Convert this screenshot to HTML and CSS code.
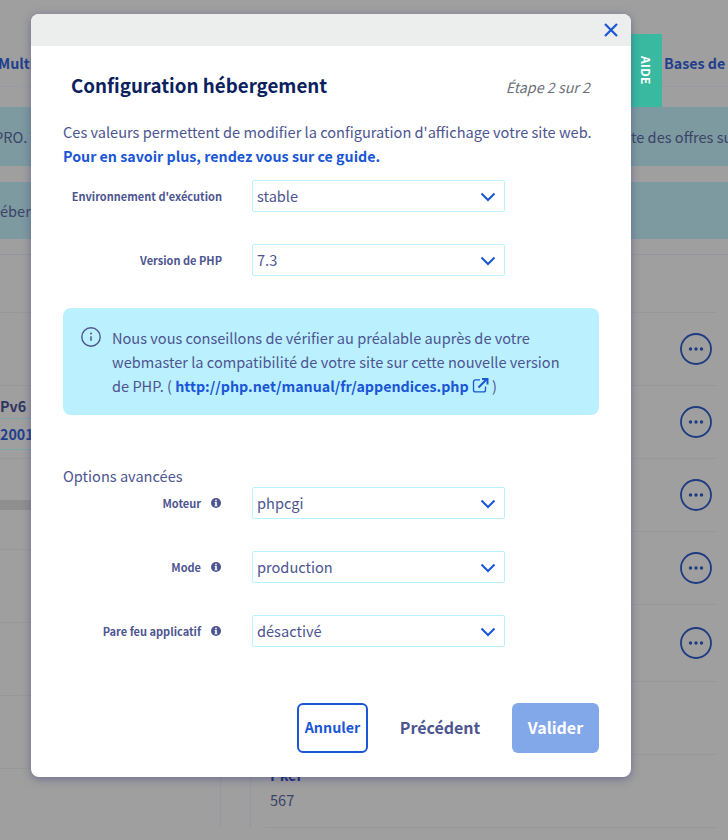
FILE: index.html
```html
<!DOCTYPE html>
<html lang="fr">
<head>
<meta charset="utf-8">
<title>Configuration hébergement</title>
<link rel="stylesheet" href="styles.css">
</head>
<body>
<svg class="defs" width="0" height="0" aria-hidden="true">
  <symbol id="chev" viewBox="0 0 16 10"><path d="M1.500 1.500 8 8l6.500-6.500" fill="none" stroke="currentColor" stroke-width="2"/></symbol>
  <symbol id="more" viewBox="0 0 32 32"><circle cx="16" cy="16" r="15" fill="none" stroke="currentColor" stroke-width="1.800"/><circle cx="10.500" cy="16" r="1.700" fill="currentColor"/><circle cx="16" cy="16" r="1.700" fill="currentColor"/><circle cx="21.500" cy="16" r="1.700" fill="currentColor"/></symbol>
  <symbol id="info" viewBox="0 0 10 10"><circle cx="5" cy="5" r="5" fill="currentColor"/><path d="M4.100 1.800h1.700v1.400H4.100zM3.700 4.100h2.100v3.100h.6v1H3.600v-1h.6V5.100h-.5z" fill="#fff"/></symbol>
</svg>

<div class="page">
  <nav class="tabs">
    <span class="tab tab-left">Multi</span>
    <span class="tab tab-right">Bases de</span>
  </nav>
  <div class="banner banner-one"><span class="banner-left">PRO. V</span><span class="banner-right">te des offres su</span></div>
  <div class="banner banner-two"><span class="banner-plain">éber</span></div>
  <div class="columns">
    <section class="col col-left">
      <div class="lrow lrow-first"></div>
      <div class="lrow"></div>
      <div class="lrow ltable">
        <div class="lhead">Pv6</div>
        <div class="lval">2001</div>
      </div>
      <div class="lrow lrow-short"></div>
      <div class="lband"></div>
      <div class="lrow lrow-after"></div>
      <div class="lrow"></div>
      <div class="lrow"></div>
      <div class="lrow"></div>
    </section>
    <section class="col col-right">
      <div class="rrow rrow-first"></div>
      <div class="rrow"><svg class="more"><use href="#more"/></svg></div>
      <div class="rrow"><svg class="more"><use href="#more"/></svg></div>
      <div class="rrow"><svg class="more"><use href="#more"/></svg></div>
      <div class="rrow"><svg class="more"><use href="#more"/></svg></div>
      <div class="rrow rrow-tall"><svg class="more"><use href="#more"/></svg></div>
      <div class="rrow"></div>
      <div class="rrow rrow-data"><div><div class="dt">Pker</div><div class="dd">567</div></div></div>
    </section>
  </div>
  <div class="aide"><span>AIDE</span></div>
</div>

<div class="modal" role="dialog">
  <header class="modal-head">
    <svg class="close" viewBox="0 0 14 14"><path d="M1 1l12 12M13 1 1 13" fill="none" stroke="currentColor" stroke-width="2.200"/></svg>
  </header>
  <div class="modal-body">
    <div class="title-row">
      <h1 class="title">Configuration hébergement</h1>
      <span class="step">Étape 2 sur 2</span>
    </div>
    <p class="intro">Ces valeurs permettent de modifier la configuration d'affichage votre site web.<br><a class="link">Pour en savoir plus, rendez vous sur ce guide.</a></p>

    <div class="form">
      <div class="field">
        <span class="label">Environnement d'exécution</span>
        <div class="select"><span>stable</span><svg class="chev"><use href="#chev"/></svg></div>
      </div>
      <div class="field">
        <span class="label">Version de PHP</span>
        <div class="select"><span>7.3</span><svg class="chev"><use href="#chev"/></svg></div>
      </div>
    </div>

    <div class="alert">
      <svg class="alert-icon" viewBox="0 0 20 20"><circle cx="10" cy="10" r="9.200" fill="none" stroke="currentColor" stroke-width="1.400"/><circle cx="10" cy="6.400" r="1" fill="currentColor"/><path d="M10 9.200v4.600" stroke="currentColor" stroke-width="1.500"/></svg>
      <p class="alert-text">Nous vous conseillons de vérifier au préalable auprès de votre webmaster la compatibilité de votre site sur cette nouvelle version de PHP. ( <a class="link">http://php.net/manual/fr/appendices.php<svg class="ext" viewBox="0 0 17 15"><path d="M8 2.500H3.500a2 2 0 0 0-2 2v8a2 2 0 0 0 2 2h8a2 2 0 0 0 2-2V9" transform="translate(0 -.6)" fill="none" stroke="currentColor" stroke-width="1.300"/><path d="M6.500 9.500 14 2M10 .9h5.500v5.500" fill="none" stroke="currentColor" stroke-width="2"/></svg></a> )</p>
    </div>

    <h2 class="advanced">Options avancées</h2>
    <div class="form">
      <div class="field">
        <span class="label label-info">Moteur<svg class="info"><use href="#info"/></svg></span>
        <div class="select"><span>phpcgi</span><svg class="chev"><use href="#chev"/></svg></div>
      </div>
      <div class="field">
        <span class="label label-info">Mode<svg class="info"><use href="#info"/></svg></span>
        <div class="select"><span>production</span><svg class="chev"><use href="#chev"/></svg></div>
      </div>
      <div class="field">
        <span class="label label-info">Pare feu applicatif<svg class="info"><use href="#info"/></svg></span>
        <div class="select"><span>désactivé</span><svg class="chev"><use href="#chev"/></svg></div>
      </div>
    </div>

    <div class="actions">
      <button class="btn btn-cancel">Annuler</button>
      <button class="btn btn-prev">Précédent</button>
      <button class="btn btn-submit">Valider</button>
    </div>
  </div>
</div>
</body>
</html>
```

FILE: styles.css
```css
* { box-sizing: border-box; }
html, body { margin: 0; padding: 0; }
body {
  width: 728px;
  height: 840px;
  overflow: hidden;
  position: relative;
  background: #9f9f9f;
  font-family: "Noto Sans CJK SC", "Noto Sans", sans-serif;
  font-size: 14.58px;
  color: #4d5591;
}
.defs { position: absolute; }

/* dimmed page behind the dialog */
.page { width: 728px; height: 840px; overflow: hidden; position: relative; color: #3c4368; }
.tabs {
  height: 87px;
  padding-top: 52px;
  display: flex;
  justify-content: space-between;
  border-bottom: 1px solid #989ba6;
}
.tab { font-weight: 700; font-size: 14.25px; line-height: 22px; color: #1f3f8c; }
.tab-left { margin-left: -2px; }
.tab-right { width: 64px; white-space: nowrap; }
.banner { background: #7c9aa0; display: flex; align-items: center; justify-content: space-between; white-space: nowrap; overflow: hidden; }
.banner-one { margin-top: 20px; height: 59px; }
.banner-two { margin-top: 16px; height: 57px; }
.banner-left { margin-left: -6px; }
.banner-right { width: 97px; overflow: hidden; }
.columns { margin-top: 15px; display: grid; grid-template-columns: 221px 478px; gap: 29px; }
.col { border-top: 1px solid #95959f; }
.col-left { border-right: 1px solid #97979f; }
.col-right { border-left: 1px solid #97979f; }
.lrow { height: 73px; border-bottom: 1px solid #989898; }
.lrow-first { height: 58px; }
.lhead { height: 33px; display: flex; align-items: center; font-weight: 700; font-size: 14.25px; line-height: 20px; color: #2f3560; padding-top: 7px; border-bottom: 1px solid #7ea3a9; }
.lval { height: 31px; display: flex; align-items: center; font-weight: 700; font-size: 14.25px; color: #1f3f8c; padding-bottom: 2px; border-bottom: 1px solid #7ea3a9; }
.lrow-short { height: 41px; border-bottom: 0; }
.lband { height: 10px; background: #8f8f8f; }
.lrow-after { height: 40px; }
.rrow {
  height: 73px;
  margin: 0 11px 0 14px;
  padding-right: 5px;
  border-bottom: 1px solid #989898;
  display: flex;
  align-items: center;
  justify-content: flex-end;
  color: #1e3a80;
}
.rrow-first { height: 58px; }
.rrow-tall { height: 77px; }
.rrow-data { justify-content: flex-start; padding: 0 0 7px 5px; }
.more { width: 32px; height: 32px; display: block; }
.dt { font-weight: 700; line-height: 24px; color: #152a70; }
.dd { line-height: 26px; color: #3c4368; }
.aide {
  position: absolute;
  left: 631px;
  top: 34px;
  width: 31px;
  height: 73px;
  background: #38b9a0;
  color: #fff;
  font-size: 12px;
  font-weight: 700;
  display: flex;
  align-items: center;
  justify-content: center;
}
.aide span { writing-mode: vertical-rl; letter-spacing: .3px; }

/* dialog */
.modal {
  position: absolute;
  left: 31px;
  top: 14px;
  width: 600px;
  height: 763px;
  background: #fff;
  border-radius: 8px;
  box-shadow: 0 2px 9px rgba(70, 70, 130, .55);
  overflow: hidden;
}
.modal-head {
  height: 32px;
  background: #eceeed;
  display: flex;
  align-items: center;
  justify-content: flex-end;
  padding-right: 13px;
  color: #1a56d6;
}
.close { width: 14px; height: 14px; display: block; }
.modal-body { padding: 0 32px 24px; }
.title-row { margin-top: 25px; padding-left: 8px; display: flex; justify-content: space-between; align-items: center; }
.title { margin: 0; font-size: 18.75px; line-height: 28px; font-weight: 700; color: #0c1f5f; }
.step { font-style: italic; font-size: 14.3px; line-height: 22px; color: #6c7079; padding-top: 4px; padding-right: 9px; }
.intro { margin: 21px 0 12px; line-height: 24px; white-space: nowrap; }
.link { color: #1a56d6; font-weight: 700; font-size: 14.25px; }
.form { display: flex; flex-direction: column; gap: 32px; }
.field { display: grid; grid-template-columns: 159px 253px; gap: 30px; align-items: center; }
.label { display: flex; justify-content: flex-end; align-items: center; font-size: 11px; font-weight: 700; line-height: 16px; white-space: nowrap; }
.label-info { padding-right: 1px; }
.info { width: 10px; height: 10px; margin-left: 10px; color: #4d5591; display: block; }
.select {
  height: 32px;
  border: 1px solid #bbf0ff;
  border-radius: 2px;
  padding: 0 8px 0 4px;
  display: flex;
  align-items: center;
  justify-content: space-between;
  line-height: 20px;
}
.select span { padding-bottom: 1px; }
.chev { width: 16px; height: 10px; margin-top: 1px; color: #1a56d6; display: block; }
.alert {
  margin-top: 32px;
  padding: 18px 36px 17px 18px;
  background: #bbf0ff;
  border-radius: 8px;
  display: flex;
  gap: 11px;
}
.alert-icon { width: 20px; height: 20px; flex: none; margin-top: 1px; color: #4d5591; }
.alert-text { margin: 0; line-height: 24px; }
.ext { width: 17px; height: 15px; margin-left: 3px; vertical-align: -1px; }
.advanced { margin: 49px 0 0; font-size: 14.58px; line-height: 23px; font-weight: 400; }
.actions { margin-top: 56px; display: flex; justify-content: flex-end; }
.btn { height: 50px; border: 0; background: none; border-radius: 6px; font-family: inherit; font-weight: 700; padding: 0 0 3px; }
.btn-cancel { width: 71px; border: 2px solid #1a56d6; color: #1a56d6; background: #fff; font-size: 14.3px; }
.btn-prev { width: 144px; color: #4d5591; font-size: 16px; }
.btn-submit { width: 87px; background: #83a8ea; color: #fff; font-size: 16px; }
```
